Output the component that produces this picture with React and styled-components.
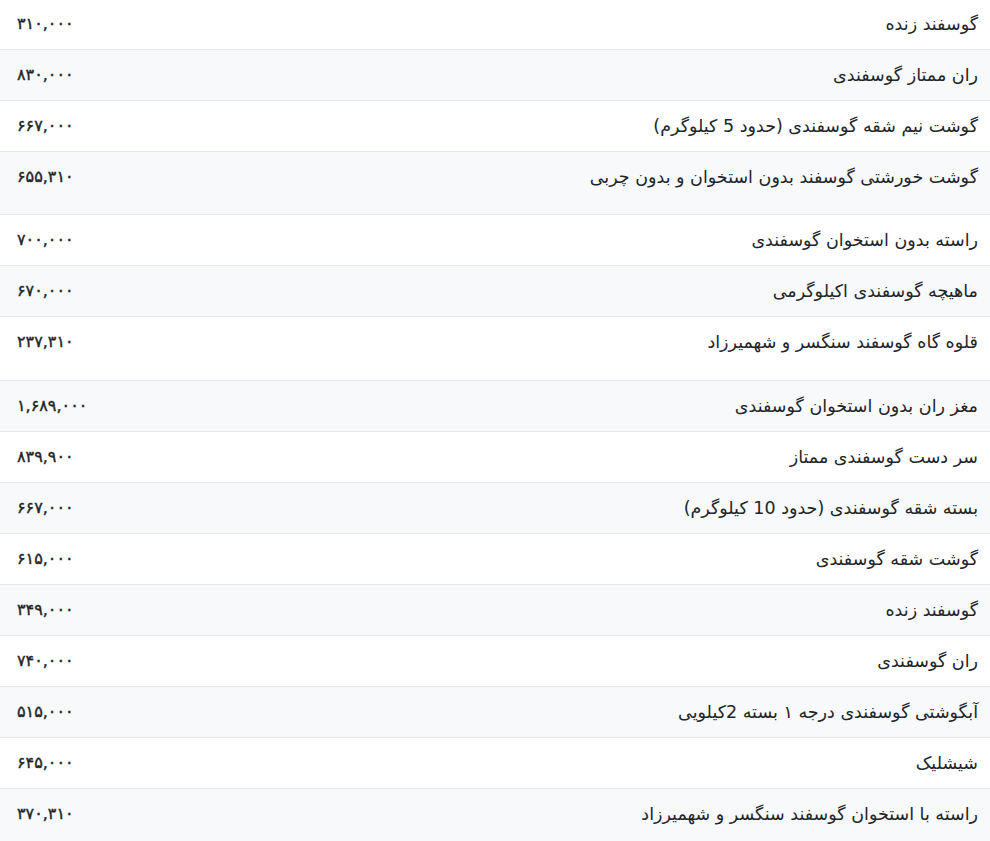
import React from 'react';
import styled, { createGlobalStyle } from 'styled-components';

const GlobalStyle = createGlobalStyle`
    body {
        margin: 0;
        background: #fff;
        font-family: "DejaVu Sans", sans-serif;
        color: #212529;
    }
`;

const Wrapper = styled.div`
    width: 100%;
    margin-top: -2px;
    direction: rtl;
`;

const Table = styled.table`
    width: 100%;
    border-collapse: collapse;
`;

const Row = styled.tr`
    background: ${props => (props.$striped ? '#f8f9fa' : '#fff')};
`;

const Cell = styled.td`
    border-top: 1px solid #e3e6ea;
    padding: 12px 12px ${props => 12 + (props.$extra || 0)}px;
    vertical-align: top;
    font-size: 17.5px;
    line-height: 26px;
    text-align: right;
`;

const Price = styled(Cell)`
    text-align: left;
    padding-left: 17px;
    font-size: 16px;
    width: 160px;
    -webkit-text-stroke: 0.4px #212529;
`;

// third value: extra space under the row (the original has an empty line there)
const items = [
    ['گوسفند زنده', '۳۱۰,۰۰۰'],
    ['ران ممتاز گوسفندی', '۸۳۰,۰۰۰'],
    ['گوشت نیم شقه گوسفندی (حدود 5 کیلوگرم)', '۶۶۷,۰۰۰'],
    ['گوشت خورشتی گوسفند بدون استخوان و بدون چربی', '۶۵۵,۳۱۰', 12],
    ['راسته بدون استخوان گوسفندی', '۷۰۰,۰۰۰'],
    ['ماهیچه گوسفندی اکیلوگرمی', '۶۷۰,۰۰۰'],
    ['قلوه گاه گوسفند سنگسر و شهمیرزاد', '۲۳۷,۳۱۰', 13],
    ['مغز ران بدون استخوان گوسفندی', '۱,۶۸۹,۰۰۰'],
    ['سر دست گوسفندی ممتاز', '۸۳۹,۹۰۰'],
    ['بسته شقه گوسفندی (حدود 10 کیلوگرم)', '۶۶۷,۰۰۰'],
    ['گوشت شقه گوسفندی', '۶۱۵,۰۰۰'],
    ['گوسفند زنده', '۳۴۹,۰۰۰'],
    ['ران گوسفندی', '۷۴۰,۰۰۰'],
    ['آبگوشتی گوسفندی درجه ۱ بسته 2کیلویی', '۵۱۵,۰۰۰'],
    ['شیشلیک', '۶۴۵,۰۰۰'],
    ['راسته با استخوان گوسفند سنگسر و شهمیرزاد', '۳۷۰,۳۱۰', 2],
];

export default function App() {
    return (
        <Wrapper>
            <GlobalStyle />
            <Table>
                <tbody>
                    {items.map(([name, price, extra], i) => (
                        <Row key={i} $striped={i % 2 === 1}>
                            <Cell $extra={extra}>{name}</Cell>
                            <Price $extra={extra}>{price}</Price>
                        </Row>
                    ))}
                </tbody>
            </Table>
        </Wrapper>
    );
}
